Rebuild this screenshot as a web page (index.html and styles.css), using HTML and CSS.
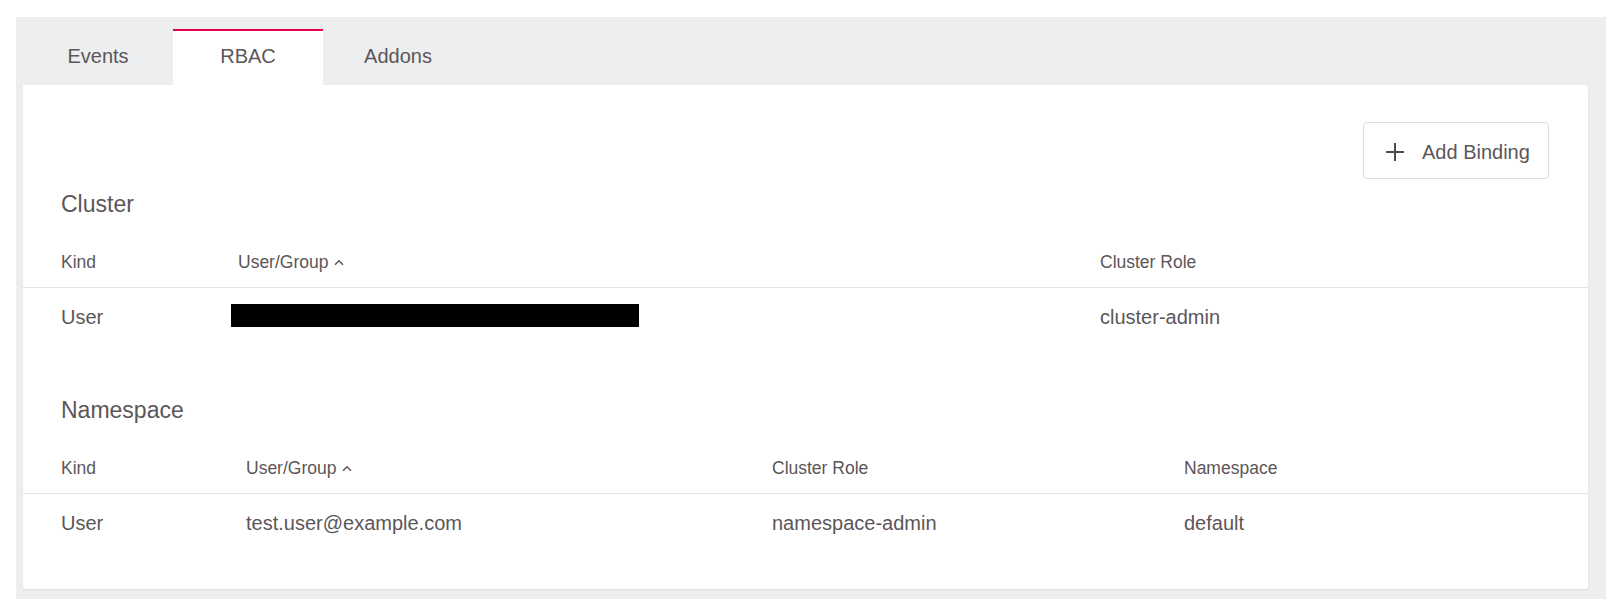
FILE: index.html
```html
<!DOCTYPE html>
<html lang="en">
<head>
<meta charset="utf-8">
<title>RBAC</title>
<link rel="stylesheet" href="styles.css">
</head>
<body>
<div class="panel">
  <div class="tabs">
    <div class="tab">Events</div>
    <div class="tab active">RBAC</div>
    <div class="tab">Addons</div>
  </div>
  <div class="card">
    <div class="toolbar">
      <button class="btn" type="button">
        <svg class="plus" width="20" height="20" viewBox="0 0 20 20"><path d="M10 1v18M1 10h18" stroke="currentColor" stroke-width="2" fill="none"/></svg>
        <span class="btn-label">Add Binding</span>
      </button>
    </div>

    <section class="section">
      <h2 class="title">Cluster</h2>
      <div class="row head cols-cluster">
        <div class="cell">Kind</div>
        <div class="cell">User/Group <svg class="caret" width="10" height="7" viewBox="0 0 10 7"><path d="M1 5.8L5 1.8L9 5.8" stroke="currentColor" stroke-width="1.5" fill="none"/></svg></div>
        <div class="cell">Cluster Role</div>
      </div>
      <div class="row body cols-cluster">
        <div class="cell">User</div>
        <div class="cell"><span class="redact"></span></div>
        <div class="cell">cluster-admin</div>
      </div>
    </section>

    <section class="section">
      <h2 class="title">Namespace</h2>
      <div class="row head cols-ns">
        <div class="cell">Kind</div>
        <div class="cell">User/Group <svg class="caret" width="10" height="7" viewBox="0 0 10 7"><path d="M1 5.8L5 1.8L9 5.8" stroke="currentColor" stroke-width="1.5" fill="none"/></svg></div>
        <div class="cell">Cluster Role</div>
        <div class="cell">Namespace</div>
      </div>
      <div class="row body cols-ns">
        <div class="cell">User</div>
        <div class="cell">test.user@example.com</div>
        <div class="cell">namespace-admin</div>
        <div class="cell">default</div>
      </div>
    </section>
  </div>
</div>
</body>
</html>
```
FILE: styles.css
```css
* { box-sizing: border-box; }
html, body { margin: 0; padding: 0; background: #ffffff; }
body {
  font-family: "Liberation Sans", Arial, sans-serif;
  color: #5c5659;
}
.panel {
  margin: 17px 14px 0 16px;
  padding: 12px 18px 10px 7px;
  background: #edeef0;
}
.tabs {
  display: flex;
  height: 56px;
}
.tab {
  width: 150px;
  height: 56px;
  border-top: 2px solid transparent;
  padding-top: 13px;
  text-align: center;
  font-size: 20px;
  line-height: 24px;
}
.tab.active {
  background: #ffffff;
  border-top-color: #e4004b;
}
.card {
  background: #ffffff;
  border-radius: 0 3px 3px 3px;
  box-shadow: 0 1px 2px rgba(0,0,0,0.08);
  padding: 37px 0 37px 0;
}
.toolbar {
  display: flex;
  justify-content: flex-end;
  padding-right: 39px;
}
.btn {
  display: flex;
  align-items: center;
  gap: 17px;
  width: 186px;
  height: 57px;
  padding: 3px 0 0 21px;
  background: #ffffff;
  border: 1px solid #dedede;
  border-radius: 4px;
  font-family: inherit;
  font-size: 20px;
  line-height: 24px;
  color: #5c5659;
  white-space: nowrap;
  overflow: visible;
}
.btn-label { white-space: nowrap; }
.plus { flex: none; color: #4f4a4c; }
.section + .section { margin-top: 50px; }
.title {
  margin: 11px 0 34px 38px;
  font-size: 23px;
  line-height: 28px;
  font-weight: normal;
}
.section + .section .title { margin-top: 0; }
.row {
  display: grid;
  padding-left: 38px;
}
.cols-cluster { grid-template-columns: 177px 862px 1fr; }
.cols-ns { grid-template-columns: 185px 526px 412px 1fr; }
.row.head {
  font-size: 17.5px;
  line-height: 20px;
  padding-bottom: 15px;
  border-bottom: 1px solid #e2e2e2;
}
.row.body {
  font-size: 20px;
  line-height: 24px;
  padding-top: 17px;
  padding-bottom: 17px;
}
.cell { white-space: nowrap; }
.caret { margin-left: 1px; vertical-align: 2px; }
.redact {
  display: inline-block;
  vertical-align: top;
  width: 408px;
  height: 23px;
  margin-left: -7px;
  margin-top: -1px;
  background: #000000;
}
```
